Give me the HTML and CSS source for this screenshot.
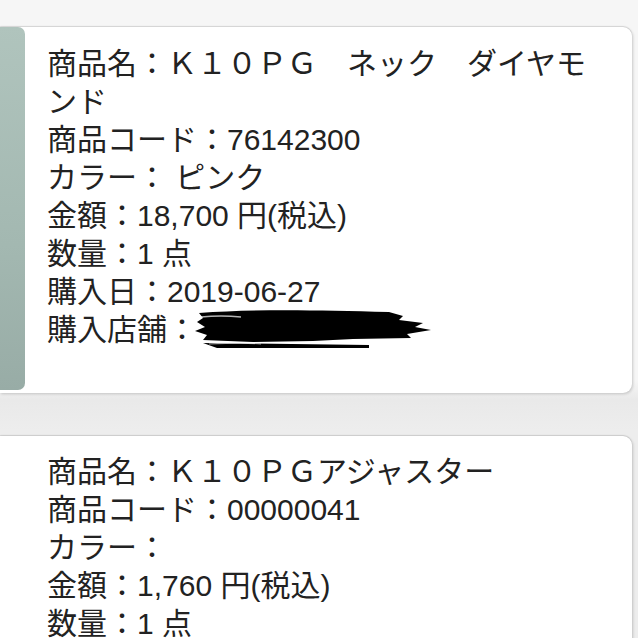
FILE: index.html
```html
<!DOCTYPE html>
<html lang="ja">
<head>
  <meta charset="UTF-8" />
  <meta name="viewport" content="width=device-width, initial-scale=1.0" />
  <title>購入履歴</title>
  <link rel="stylesheet" href="styles.css">
</head>
<body>
  <div class="list">
    <div class="card">
      <div class="thumb"></div>
      <div class="info">
        <p>商品名：Ｋ１０ＰＧ　ネック　ダイヤモンド</p>
        <p>商品コード：76142300</p>
        <p>カラー： ピンク</p>
        <p>金額：18,700 円(税込)</p>
        <p>数量：1 点</p>
        <p>購入日：2019-06-27</p>
        <p>購入店舗：<span class="redact">
          <svg width="244" height="44" viewBox="0 0 244 44">
            <path d="M6 5 C60 1 120 2 196 4 L210 8 L206 12 L230 15 L222 19 L238 22 L214 26 L218 30 L160 31 L120 33 L60 34 L10 32 L14 27 L2 23 L12 19 L4 14 L10 10 Z" fill="#000"/>
            <path d="M10 35 L176 37 L176 40 L24 40 Z" fill="#000"/>
            <path d="M8 9 C28 7 38 8 48 9" stroke="#fff" stroke-width="1.5" fill="none" opacity="0.7"/>
            <path d="M16 36 C38 35 58 35 68 36" stroke="#fff" stroke-width="1.2" fill="none" opacity="0.6"/>
          </svg>
        </span></p>
      </div>
    </div>

    <div class="card">
      <div class="info">
        <p>商品名：Ｋ１０ＰＧアジャスター</p>
        <p>商品コード：00000041</p>
        <p>カラー：</p>
        <p>金額：1,760 円(税込)</p>
        <p>数量：1 点</p>
      </div>
    </div>
  </div>
</body>
</html>
```

FILE: styles.css
```css
body {
  margin: 0;
  background: #f6f6f6;
  font-family: 'Liberation Sans', 'Noto Sans CJK JP', sans-serif;
  color: #222;
  overflow: hidden;
}

.list {
  display: flex;
  flex-direction: column;
  gap: 43px;
  padding-top: 27px;
  padding-right: 6px;
  background: linear-gradient(#f6f6f6 0, #f6f6f6 380px, #e9e9e9 400px, #ededed 430px);
}

.card {
  display: flex;
  background: #fff;
  border-radius: 0 9px 9px 0;
  box-shadow: 0 -1px 1px rgba(0, 0, 0, 0.12), 1px 1px 3px rgba(0, 0, 0, 0.18);
  min-height: 200px;
}

.thumb {
  width: 25px;
  flex-shrink: 0;
  margin-bottom: 3px;
  border-radius: 0 7px 7px 0;
  background: linear-gradient(#b0c4bd, #a3b8b1 60%, #98aca6);
}

.info {
  flex: 1;
  padding: 18px 26px 43px 22px;
}

.card:last-child .info {
  padding-left: 47px;
  padding-top: 17px;
}

.info p {
  margin: 0;
  font-size: 30px;
  line-height: 38px;
}

.redact {
  display: inline-block;
  height: 38px;
  vertical-align: -10px;
  margin-left: -4px;
}

.redact svg {
  display: block;
  margin-top: -4px;
}
```
